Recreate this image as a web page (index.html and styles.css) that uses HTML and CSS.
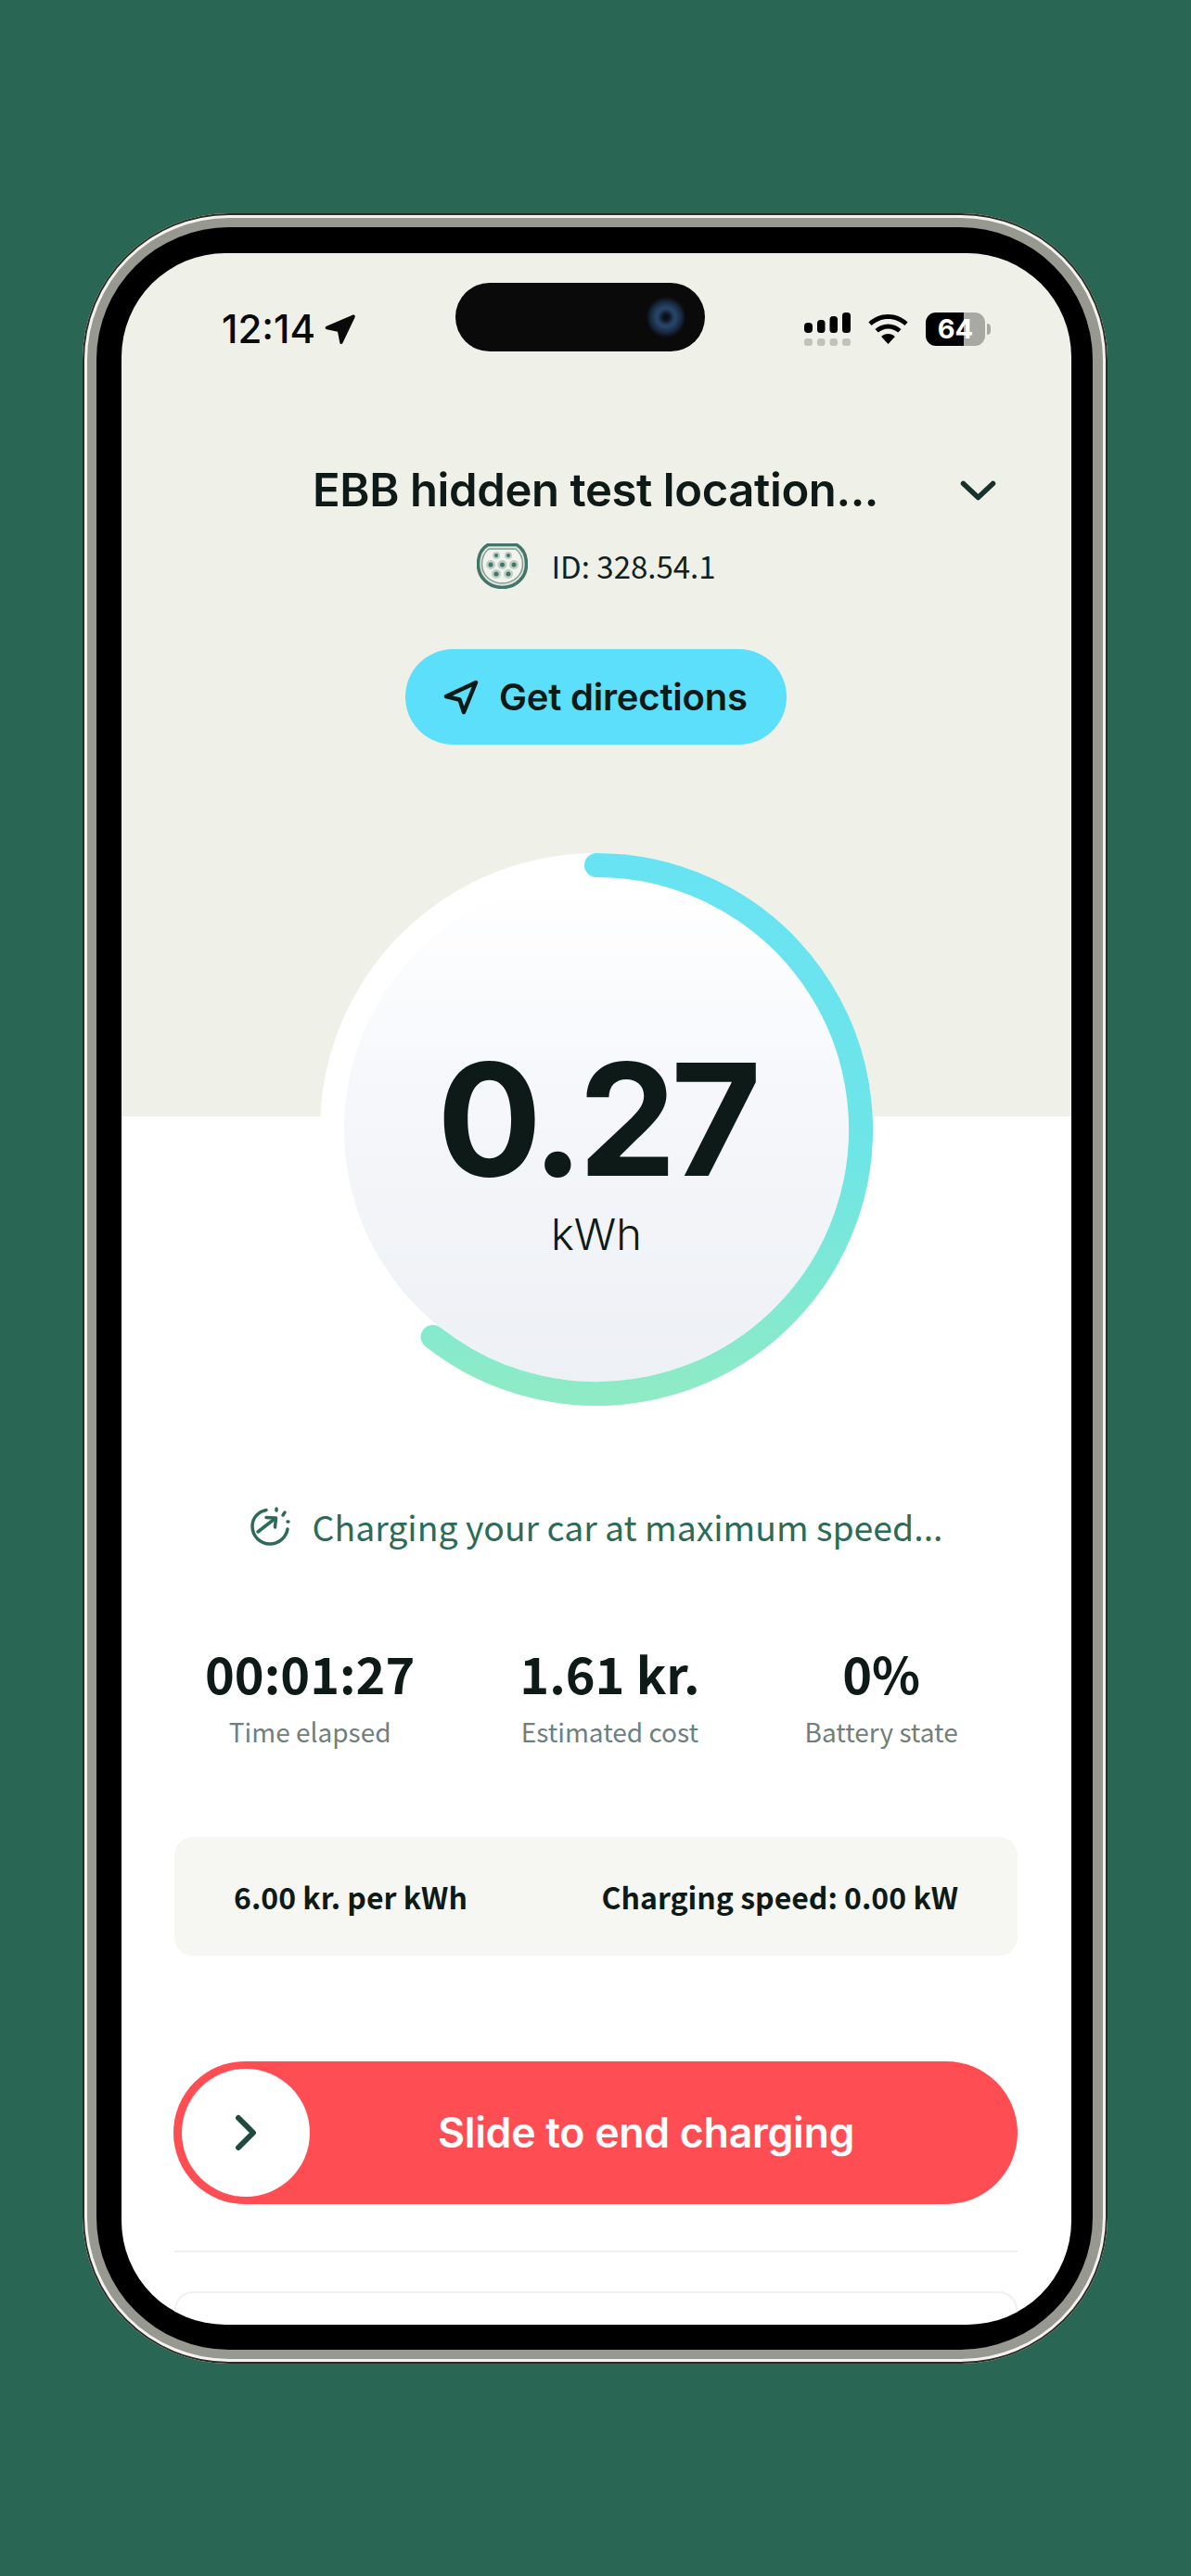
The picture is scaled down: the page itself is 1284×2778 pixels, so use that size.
FILE: index.html
```html
<!DOCTYPE html>
<html>
<head>
  <title>Charging session</title>
  <link rel="stylesheet" href="styles.css">
</head>
<body>
  <div class="phone">
    <div class="bezel">
      <div class="screen">

        <div class="status-bar">
          <div class="clock">
            <span>12:14</span>
            <svg width="33" height="33" viewBox="0 0 33 33"><path d="M30 .8 2 12.8c-2 1-1.800 3 .4 3.500l11.600 2.500 2.300 11.700c.5 2 2.400 2.200 3.200.3L32.600 3.300C33.300 1.300 32 0 30 .8Z" fill="#0a0a0a"/></svg>
          </div>
          <div class="island"><div class="camera"></div></div>
          <div class="status-icons">
            <svg width="50" height="36" viewBox="0 0 50 36">
              <rect x="0" y="11" width="9" height="11" rx="4" fill="#000"/>
              <rect x="14" y="8" width="8.500" height="14" rx="3.500" fill="#000"/>
              <rect x="27.500" y="4" width="8.500" height="18" rx="3.500" fill="#000"/>
              <rect x="41" y="0" width="9" height="22" rx="3.500" fill="#000"/>
              <rect x="0" y="28" width="9" height="8" rx="3" fill="#c2c2bc"/>
              <rect x="14" y="28" width="8.500" height="8" rx="3" fill="#c2c2bc"/>
              <rect x="27.500" y="28" width="8.500" height="8" rx="3" fill="#c2c2bc"/>
              <rect x="41" y="28" width="9" height="8" rx="3" fill="#c2c2bc"/>
            </svg>
            <svg class="wifi" width="43" height="32" viewBox="0 0 43 32">
              <path d="M21.500 0C13.300 0 6 3.200.4 8.400L3.600 12c4.700-4.400 11-7.100 17.900-7.100s13.200 2.700 17.900 7.100l3.200-3.600C37 3.200 29.700 0 21.500 0Z" fill="#000"/>
              <path d="M21.500 10.500c-5.400 0-10.300 2.100-14 5.500l3.300 3.600c2.800-2.600 6.600-4.200 10.700-4.200s7.900 1.600 10.700 4.200l3.300-3.600c-3.700-3.400-8.600-5.500-14-5.500Z" fill="#000"/>
              <path d="M21.500 21c-2.900 0-5.500 1.100-7.400 2.900l7.400 8.100 7.400-8.100c-1.900-1.800-4.500-2.900-7.400-2.900Z" fill="#000"/>
            </svg>
            <div class="battery"><span>64</span></div>
            <div class="battery-nub"></div>
          </div>
        </div>

        <div class="location">
          <h1>EBB hidden test location...</h1>
          <svg width="39" height="23" viewBox="0 0 39 23"><path d="M3.500 3.500l16 15 16-15" fill="none" stroke="#17322c" stroke-width="5.500" stroke-linecap="round" stroke-linejoin="round"/></svg>
        </div>

        <div class="charger-id">
          <svg width="55" height="49" viewBox="0 0 55 49">
            <path d="M12 1.500h31c7 4 10.500 12 10.500 21 0 14-11 25-26 25S1.500 36.500 1.500 22.500c0-9 3.500-17 10.500-21Z" fill="#dfe5dd" stroke="#44756a" stroke-width="3.500"/>
            <path d="M13 6h29c5 4 7.500 10 7.500 16.500C49.500 34 40 43 27.500 43S5.500 34 5.500 22.500C5.500 16 8 10 13 6Z" fill="#f1f3ec" stroke="#7fa096" stroke-width="1.500"/>
            <circle cx="21" cy="13" r="4" fill="#bcd0c8"/><circle cx="21" cy="13" r="2" fill="#44756a"/>
            <circle cx="34" cy="13" r="4" fill="#bcd0c8"/><circle cx="34" cy="13" r="2" fill="#44756a"/>
            <circle cx="15" cy="23" r="5" fill="#bcd0c8"/><circle cx="15" cy="23" r="2.500" fill="#44756a"/>
            <circle cx="27.500" cy="23" r="5" fill="#bcd0c8"/><circle cx="27.500" cy="23" r="2.500" fill="#44756a"/>
            <circle cx="40" cy="23" r="5" fill="#bcd0c8"/><circle cx="40" cy="23" r="2.500" fill="#44756a"/>
            <circle cx="21" cy="33" r="5" fill="#bcd0c8"/><circle cx="21" cy="33" r="2.500" fill="#44756a"/>
            <circle cx="34" cy="33" r="5" fill="#bcd0c8"/><circle cx="34" cy="33" r="2.500" fill="#44756a"/>
          </svg>
          <span>ID: 328.54.1</span>
        </div>

        <button class="directions" type="button">
          <svg width="38" height="38" viewBox="0 0 38 38"><path d="M35 3 3 18l14.500 3.500L22 35Z" fill="none" stroke="#0d1a17" stroke-width="4.500" stroke-linejoin="round"/></svg>
          Get directions
        </button>

        <div class="gauge">
          <svg width="596" height="596" viewBox="0 0 596 596">
            <defs>
              <linearGradient id="ringColor" x1="0" y1="0" x2="0" y2="1">
                <stop offset="0" stop-color="#68e3f3"/>
                <stop offset="0.55" stop-color="#6ee5e6"/>
                <stop offset="1" stop-color="#8eebc5"/>
              </linearGradient>
              <linearGradient id="discColor" x1="0" y1="0" x2="0" y2="1">
                <stop offset="0" stop-color="#ffffff"/>
                <stop offset="0.5" stop-color="#f4f6fa"/>
                <stop offset="1" stop-color="#edf0f4"/>
              </linearGradient>
            </defs>
            <circle cx="298" cy="298" r="298" fill="#fff"/>
            <circle cx="298" cy="298" r="272" fill="url(#discColor)"/>
            <path d="M298 13A285 285 0 1 1 121.600 521.800" fill="none" stroke="url(#ringColor)" stroke-width="26" stroke-linecap="round"/>
          </svg>
          <div class="reading">
            <div class="reading-value">0.27</div>
            <div class="reading-unit">kWh</div>
          </div>
        </div>

        <div class="charging-note">
          <svg width="43" height="42" viewBox="0 0 43 42" fill="none" stroke="#2c6b58" stroke-width="3.500" stroke-linecap="round" stroke-linejoin="round">
            <path d="M17 3.500C8.500 5 2 12 2 21c0 10.500 8.500 19 19 19 9.500 0 17.500-7 19-16"/>
            <path d="M8 27 26 13"/>
            <path d="M17 11.500l10.500.5-1 10"/>
            <path d="M28 2v2"/>
            <path d="M37 6l-2 3"/>
            <path d="M41 16h-1"/>
          </svg>
          <span>Charging your car at maximum speed...</span>
        </div>

        <div class="stats">
          <div class="stat">
            <div class="stat-value">00:01:27</div>
            <div class="stat-label">Time elapsed</div>
          </div>
          <div class="stat">
            <div class="stat-value">1.61 kr.</div>
            <div class="stat-label">Estimated cost</div>
          </div>
          <div class="stat">
            <div class="stat-value">0%</div>
            <div class="stat-label">Battery state</div>
          </div>
        </div>

        <div class="rate-card">
          <span>6.00 kr. per kWh</span>
          <span>Charging speed: 0.00 kW</span>
        </div>

        <div class="slider">
          <div class="slider-knob">
            <svg width="24" height="40" viewBox="0 0 24 40"><path d="M4 4l16 16L4 36" fill="none" stroke="#1f4a3f" stroke-width="6" stroke-linecap="round" stroke-linejoin="round"/></svg>
          </div>
          <div class="slider-text">Slide to end charging</div>
        </div>

        <div class="divider"></div>
        <div class="next-card"></div>

      </div>
    </div>
  </div>
</body>
</html>
```

FILE: styles.css
```css
html,
body {
  margin: 0;
  padding: 0;
}

body {
  background-color: #296653;
  min-height: 2778px;
  overflow: hidden;
  font-family: "Noto Sans CJK JP", "Noto Sans", sans-serif;
  color: #0d1a17;
}

.phone {
  box-sizing: border-box;
  width: 1105px;
  height: 2319px;
  margin: 230px 0 0 89px;
  padding: 15px 16px 15px 15px;
  background-color: #979890;
  border-radius: 158px;
  box-shadow: inset 0 0 0 2px #2a2c27, inset 0 0 0 5px #f2f2ee;
}

.bezel {
  box-sizing: border-box;
  height: 100%;
  padding: 28px 23px 27px 27px;
  background-color: #000;
  border-radius: 143px;
}

.screen {
  height: 100%;
  overflow: hidden;
  border-radius: 112px;
  background: linear-gradient(#eff0e7 931px, #fff 931px);
}

/* status bar */
.status-bar {
  display: flex;
  align-items: flex-start;
  padding: 32px 0 0 108px;
}

.clock {
  display: flex;
  align-items: center;
  gap: 10px;
  width: 150px;
  margin: 26px 102px 0 0;
  height: 48px;
  font-family: Inter, sans-serif;
  font-weight: 500;
  font-size: 42px;
  line-height: 48px;
  color: #0a0a0a;
}

.island {
  display: flex;
  align-items: center;
  justify-content: flex-end;
  box-sizing: border-box;
  width: 269px;
  height: 74px;
  margin-right: 107px;
  padding-right: 22px;
  background-color: #0a0a0a;
  border-radius: 37px;
}

.camera {
  width: 40px;
  height: 44px;
  border-radius: 50%;
  background: radial-gradient(circle, #0a0f16 0 10%, #2a4a70 32%, #16263c 58%, #0a0a0a 74%);
  filter: blur(1px);
}

.status-icons {
  display: flex;
  align-items: center;
  height: 36px;
  margin-top: 32px;
}

.wifi {
  margin-left: 19px;
}

.battery {
  width: 64px;
  height: 36px;
  margin-left: 19px;
  border-radius: 11px;
  background: linear-gradient(90deg, #000 64%, #a9a9a3 64%);
  color: #fff;
  font-family: Inter, sans-serif;
  font-weight: 700;
  font-size: 29px;
  line-height: 36px;
  text-align: center;
}

.battery-nub {
  width: 4px;
  height: 12px;
  margin-left: 2px;
  border-radius: 0 6px 6px 0;
  background-color: #a9a9a3;
}

/* location */
.location {
  display: flex;
  align-items: center;
  margin-top: 120px;
  padding-left: 206px;
}

.location h1 {
  margin: 0 88px 0 0;
  font-family: Inter, sans-serif;
  font-weight: 600;
  font-size: 49px;
  line-height: 60px;
  letter-spacing: -0.4px;
  white-space: nowrap;
}

.charger-id {
  display: flex;
  justify-content: center;
  align-items: center;
  gap: 25px;
  margin-top: 27px;
  font-size: 33px;
  line-height: 49px;
  color: #12211d;
}

.directions {
  display: flex;
  align-items: center;
  gap: 22px;
  width: 411px;
  height: 103px;
  margin: 65px 0 0 306px;
  padding: 0 0 0 41px;
  border: none;
  border-radius: 52px;
  background-color: #5cdffa;
  font-family: Inter, sans-serif;
  font-weight: 600;
  font-size: 40px;
  letter-spacing: -0.2px;
  color: #0d1a17;
}

/* gauge */
.gauge {
  display: grid;
  width: 596px;
  height: 596px;
  margin: 117px 0 0 214px;
}

.gauge svg,
.reading {
  grid-area: 1 / 1;
}

.reading {
  display: flex;
  flex-direction: column;
  align-items: center;
  padding-top: 202px;
}

.reading-value {
  font-family: Inter, sans-serif;
  font-weight: 650;
  font-size: 168px;
  line-height: 170px;
  letter-spacing: -6px;
  color: #0d1a17;
}

.reading-unit {
  margin-top: 12px;
  font-family: Inter, sans-serif;
  font-weight: 300;
  font-size: 47px;
  line-height: 54px;
}

/* charging info */
.charging-note {
  display: flex;
  justify-content: center;
  align-items: center;
  gap: 24px;
  height: 42px;
  margin-top: 109px;
  font-size: 37.400px;
  line-height: 42px;
  color: #2c6b58;
}

.stats {
  display: flex;
  gap: 113px;
  margin-top: 109px;
  padding-left: 90px;
}

.stat {
  text-align: center;
}

.stat-value {
  font-weight: 700;
  font-size: 54px;
  line-height: 56px;
}

.stat-label {
  margin-top: 17px;
  font-size: 28px;
  line-height: 36px;
  color: #6f7f7b;
}

.rate-card {
  display: flex;
  justify-content: space-between;
  align-items: center;
  height: 128px;
  margin: 96px 58px 0 57px;
  padding: 0 64px;
  background-color: #f6f6f2;
  border-radius: 20px;
  font-weight: 600;
  font-size: 32px;
}

/* slider */
.slider {
  display: flex;
  align-items: center;
  height: 154px;
  margin: 114px 58px 0 56px;
  padding-left: 9px;
  background-color: #ff4d54;
  border-radius: 77px;
}

.slider-knob {
  display: flex;
  justify-content: center;
  align-items: center;
  flex-shrink: 0;
  width: 138px;
  height: 138px;
  border-radius: 50%;
  background-color: #fff;
}

.slider-text {
  margin-left: 138px;
  font-family: Inter, sans-serif;
  font-weight: 600;
  font-size: 44.700px;
  letter-spacing: -0.3px;
  color: #fff;
}

.divider {
  height: 2px;
  margin: 50px 58px 0 57px;
  background-color: #eef1ef;
}

.next-card {
  height: 100px;
  margin: 42px 58px 0 57px;
  border: 2px solid #eef1ef;
  border-radius: 20px;
}
```
